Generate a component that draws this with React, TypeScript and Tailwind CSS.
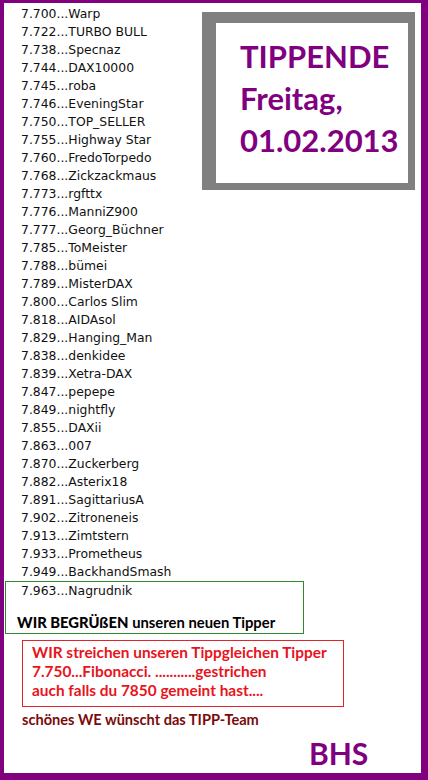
const tipps: [string, string][] = [
  ['7.700', 'Warp'],
  ['7.722', 'TURBO BULL'],
  ['7.738', 'Specnaz'],
  ['7.744', 'DAX10000'],
  ['7.745', 'roba'],
  ['7.746', 'EveningStar'],
  ['7.750', 'TOP_SELLER'],
  ['7.755', 'Highway Star'],
  ['7.760', 'FredoTorpedo'],
  ['7.768', 'Zickzackmaus'],
  ['7.773', 'rgfttx'],
  ['7.776', 'ManniZ900'],
  ['7.777', 'Georg_Büchner'],
  ['7.785', 'ToMeister'],
  ['7.788', 'bümei'],
  ['7.789', 'MisterDAX'],
  ['7.800', 'Carlos Slim'],
  ['7.818', 'AIDAsol'],
  ['7.829', 'Hanging_Man'],
  ['7.838', 'denkidee'],
  ['7.839', 'Xetra-DAX'],
  ['7.847', 'pepepe'],
  ['7.849', 'nightfly'],
  ['7.855', 'DAXii'],
  ['7.863', '007'],
  ['7.870', 'Zuckerberg'],
  ['7.882', 'Asterix18'],
  ['7.891', 'SagittariusA'],
  ['7.902', 'Zitroneneis'],
  ['7.913', 'Zimtstern'],
  ['7.933', 'Prometheus'],
  ['7.949', 'BackhandSmash'],
];

const App = () => {
  return (
    <div className="w-[428px] h-[780px] bg-white border-[#800080] border-l-4 border-t-[3px] border-r-[7px] border-b-[7px] overflow-hidden">
      <div className="pt-[2px] font-['DejaVu_Sans',sans-serif] text-[12.4px] text-[#111]">
        {/* Tippende-Kasten */}
        <div className="float-right mt-[7px] mr-[6px] w-[213px] h-[178px] bg-[#808080] pl-[14px] pt-[11px] pr-[7px] pb-[7px]">
          <div className="h-full bg-white pl-[24px] pt-[12px] font-['Lato',sans-serif] font-bold text-[#800080] text-[31px] leading-[42px]">
            <div>TIPPENDE</div>
            <div>Freitag,</div>
            <div>01.02.2013</div>
          </div>
        </div>

        {tipps.map(([punkte, name]) => (
          <div key={punkte} className="h-[18px] leading-[18px] pl-[17px] whitespace-nowrap">
            {punkte}...{name}
          </div>
        ))}

        {/* neuer Tipper */}
        <div className="clear-both ml-[1px] w-[299px] h-[53px] border border-[#2e8b2e]">
          <div className="h-[16px] leading-[16px] pl-[15px] mt-[1px]">7.963...Nagrudnik</div>
          <div className="mt-[15px] pl-[11px] font-['Lato',sans-serif] text-[14.8px] leading-[16px] text-black">
            <span className="font-black">WIR BEGRÜßEN</span>{' '}
            <span className="font-bold">unseren neuen Tipper</span>
          </div>
        </div>

        {/* gestrichen */}
        <div className="mt-[6px] ml-[18px] w-[322px] h-[67px] border border-[#e0242a] pl-[9px] pt-[2px] font-['Lato',sans-serif] font-bold text-[15.4px] leading-[19px] text-[#e8141c]">
          <div>WIR streichen unseren Tippgleichen Tipper</div>
          <div>7.750...Fibonacci. ...........gestrichen</div>
          <div>auch falls du 7850 gemeint hast....</div>
        </div>

        <div className="mt-[4px] ml-[18px] font-['Lato',sans-serif] font-bold text-[14.6px] leading-[18px] text-[#7a0a0a]">
          schönes WE wünscht das TIPP-Team
        </div>

        <div className="mt-[8px] ml-[305px] font-['Lato',sans-serif] font-bold text-[#800080] text-[30px] leading-[32px]">
          BHS
        </div>
      </div>
    </div>
  );
};

export default App;
